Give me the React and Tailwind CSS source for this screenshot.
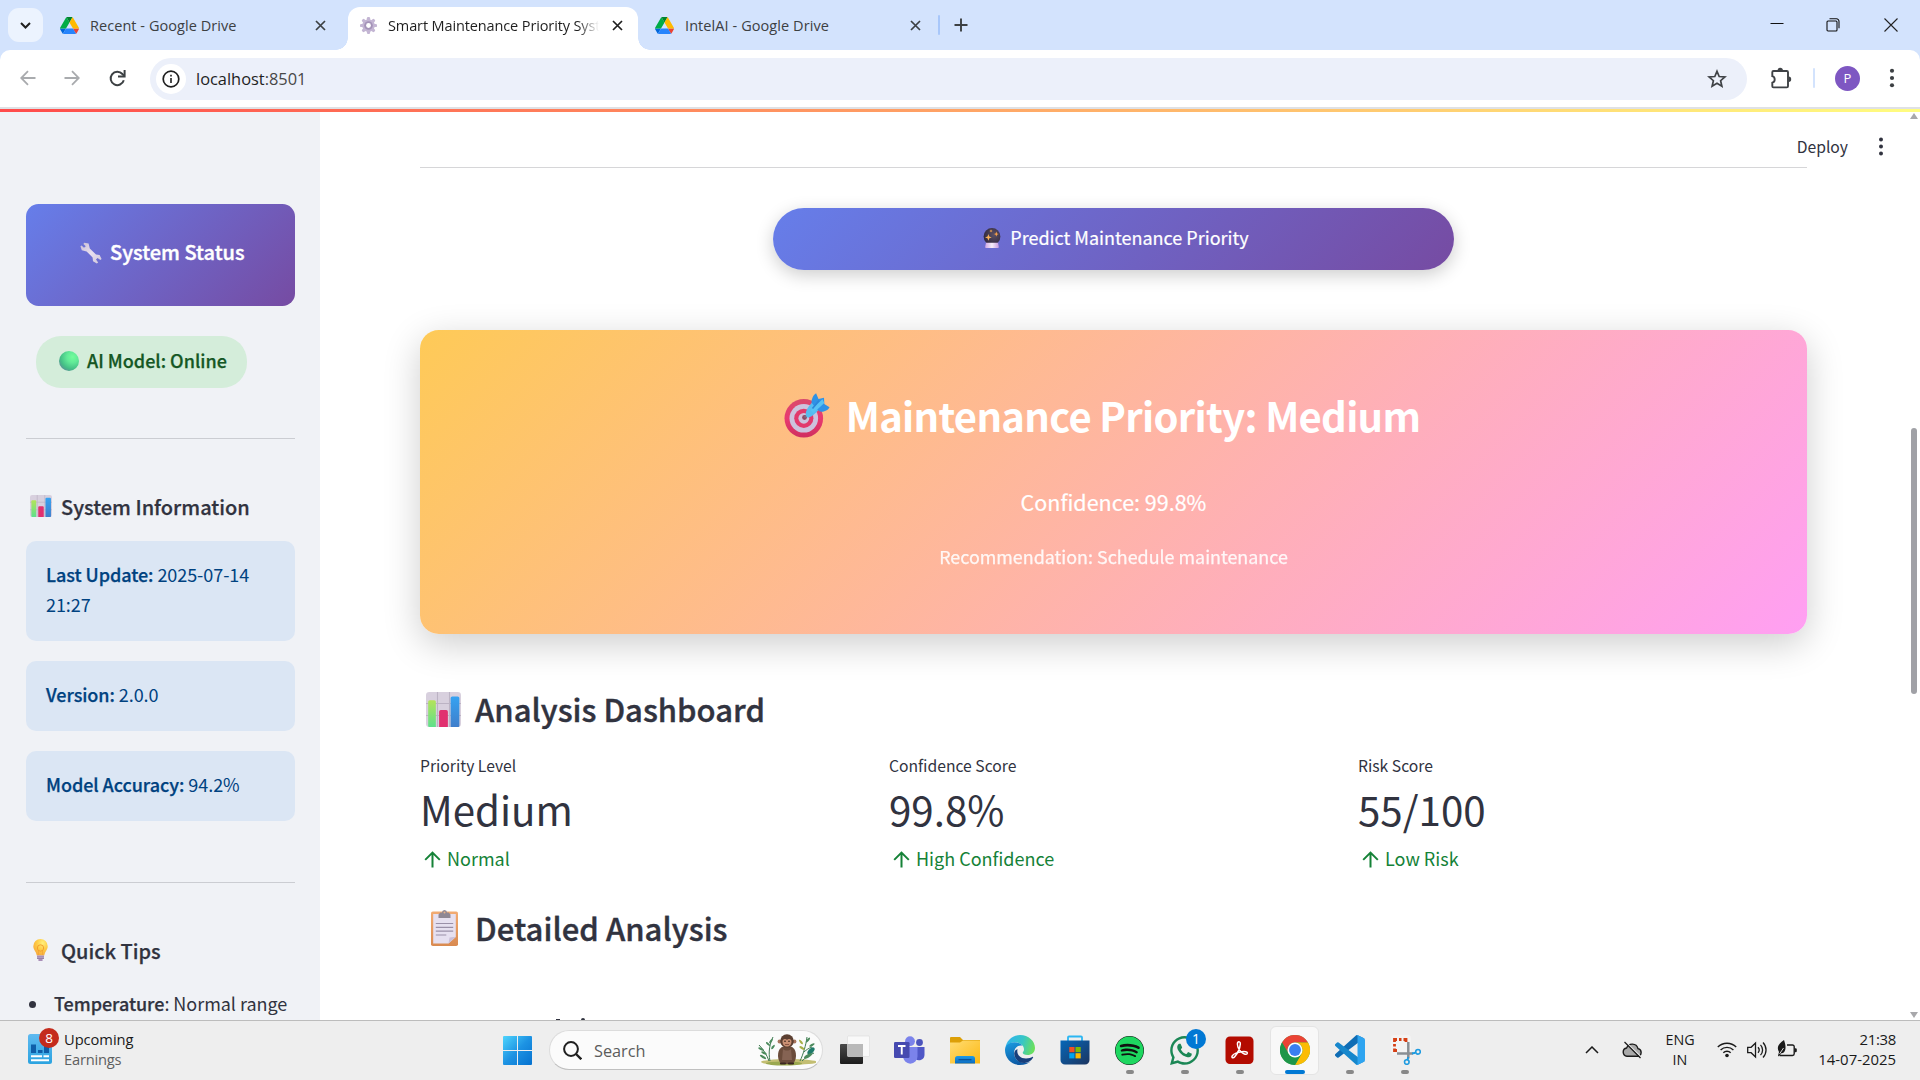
import React from "react";
import { FaSpotify, FaWhatsapp } from "react-icons/fa";

/* ---------- emoji ---------- */

const Wrench = () => (
  <svg className="h-[22px] w-[22px] shrink-0" viewBox="0 0 22 22">
    <defs>
      <linearGradient id="wr" x1="0" y1="0" x2="1" y2="1">
        <stop offset="0" stopColor="#c9bdd2" />
        <stop offset=".5" stopColor="#e8dff0" />
        <stop offset="1" stopColor="#cfc5d8" />
      </linearGradient>
    </defs>
    <path d="M4.2.8 8.6 1.6 9.8 6.6 16 12.6l3.6.4 2 4-1.2 1-2.8-2-1.6 1.6 2.2 2.8-1.4 1-3.8-2.2-.4-3.8-6-6L1.8 8.2.4 4.2l1.2-.8 2.4 2.4 1.8-1.6L3.4 2z" fill="url(#wr)" />
  </svg>
);

const GreenCircle = () => (
  <svg className="h-5 w-5 shrink-0" viewBox="0 0 20 20">
    <defs>
      <radialGradient id="gc" cx=".68" cy=".3" r=".8">
        <stop offset="0" stopColor="#72fd9b" />
        <stop offset=".35" stopColor="#62ea98" />
        <stop offset=".75" stopColor="#45bf86" />
        <stop offset="1" stopColor="#5a8f97" />
      </radialGradient>
    </defs>
    <circle cx="10" cy="10" r="10" fill="url(#gc)" />
  </svg>
);

const Chart = ({ className, id }) => (
  <svg className={className} viewBox="0 0 32 32">
    <defs>
      <linearGradient id={id + "g"} x1="0" y1="0" x2="0" y2="1">
        <stop offset="0" stopColor="#b4e35a" />
        <stop offset="1" stopColor="#5fe08c" />
      </linearGradient>
      <linearGradient id={id + "b"} x1="0" y1="0" x2="0" y2="1">
        <stop offset="0" stopColor="#36a3f2" />
        <stop offset="1" stopColor="#3f7ecb" />
      </linearGradient>
    </defs>
    <rect width="32" height="32" rx="3" fill="#d8d0de" />
    <path d="M10.5 0v32M21.5 0v32M0 10.5h32M0 21.5h32" stroke="#bcb3c4" strokeWidth="1" />
    <path d="M2 9a1.5 1.5 0 0 1 1.500-1.500h4A1.500 1.500 0 0 1 9 9v23H3a1 1 0 0 1-1-1z" fill={"url(#" + id + "g)"} />
    <path d="M12 18a1.500 1.500 0 0 1 1.500-1.500h5A1.500 1.500 0 0 1 20 18v14h-8z" fill="#e1306f" />
    <path d="M22.500 5.500A1.500 1.500 0 0 1 24 4h5a1.500 1.500 0 0 1 1.500 1.500V31a1 1 0 0 1-1 1h-7z" fill={"url(#" + id + "b)"} />
  </svg>
);

const Bulb = () => (
  <svg className="h-[22px] w-[15px] shrink-0" viewBox="0 0 15 22">
    <defs>
      <radialGradient id="bu" cx=".65" cy=".25" r=".8">
        <stop offset="0" stopColor="#fff07c" />
        <stop offset=".5" stopColor="#fecb45" />
        <stop offset="1" stopColor="#f6a83c" />
      </radialGradient>
    </defs>
    <path d="M7.500 0A7.200 7.200 0 0 1 14.700 7.200c0 3.300-2.500 4.700-3.500 9.300H3.800C2.800 11.900.3 10.500.3 7.200A7.200 7.200 0 0 1 7.500 0z" fill="url(#bu)" />
    <circle cx="7.500" cy="9" r="3.200" fill="none" stroke="#f09a2c" strokeWidth=".9" />
    <path d="M5.500 16v-4M9.500 16v-4" stroke="#f0a33a" strokeWidth=".8" />
    <rect x="4" y="16.500" width="7" height="1.700" fill="#a98fb8" />
    <rect x="4" y="18.400" width="7" height="1.500" fill="#8f769f" />
    <rect x="5.200" y="20" width="4.600" height="2" rx="1" fill="#a98fb8" />
  </svg>
);

const CrystalBall = () => (
  <svg className="h-5 w-[18px] shrink-0" viewBox="0 0 18 20">
    <defs>
      <radialGradient id="cb" cx=".6" cy=".4" r=".6">
        <stop offset="0" stopColor="#5b5166" />
        <stop offset="1" stopColor="#332a40" />
      </radialGradient>
      <linearGradient id="cs" x1="0" x2="1" y1="0" y2="0">
        <stop offset="0" stopColor="#cfa6e6" />
        <stop offset=".5" stopColor="#f6eef9" />
        <stop offset="1" stopColor="#c79be0" />
      </linearGradient>
    </defs>
    <circle cx="9" cy="8.500" r="8.400" fill="url(#cb)" />
    <path d="M3 14.800h12l.8 4a1 1 0 0 1-1 1.200H3.200a1 1 0 0 1-1-1.200z" fill="url(#cs)" />
    <path d="m5.400 6 .9 2.500 2.500.9-2.500.9-.9 2.500-.9-2.500-2.500-.9 2.500-.9z" fill="#f9b25b" />
    <path d="m13.300 3.600.7 1.800 1.700.7-1.700.7-.7 1.800-.7-1.800-1.700-.7 1.700-.7z" fill="#f9a24b" />
    <path d="m8 1.300.5 1.200 1.200.4-1.200.5L8 4.500l-.5-1.100-1.200-.5 1.200-.4z" fill="#f3a653" />
  </svg>
);

const Target = () => (
  <svg className="h-[46px] w-[46px] shrink-0" viewBox="0 0 46 46">
    <defs>
      <linearGradient id="tg" x1="0" y1="0" x2="0" y2="1">
        <stop offset="0" stopColor="#d94a6c" />
        <stop offset=".5" stopColor="#e93a70" />
        <stop offset="1" stopColor="#cf2f5f" />
      </linearGradient>
    </defs>
    <circle cx="19.800" cy="25.300" r="19.300" fill="url(#tg)" />
    <circle cx="19.800" cy="25.300" r="14.300" fill="#cdc3dd" />
    <circle cx="19.800" cy="25.300" r="9.600" fill="#e23a6c" />
    <circle cx="19.800" cy="25.300" r="5.400" fill="#cdc3dd" />
    <circle cx="20.500" cy="24.500" r="2.400" fill="#8f4a63" />
    <path d="M20.500 24.500 31 14" stroke="#7b6a86" strokeWidth="1.800" />
    <path d="M22 19c.8-3.500 4-7.500 7-10.500L36 15c-2.500 3.500-7 8-11 9.600-2.600.6-3.700-2.600-3-5.600z" fill="#55bdf0" />
    <path d="M27.500 9.500c0-3.500 2-8 4.600-9.300L34.500 6l5.500-1.200.3 6.200 5.200 3.200c-1.500 3.200-6 5-9.700 4.400L32 15.500z" fill="#2f92e6" />
    <path d="M26.500 17.500 38.500 6.300l1.800 3.700L29.500 20z" fill="#58c3f3" />
    <path d="m28.500 15.500 6.500-8" stroke="#2c86d8" strokeWidth="1.600" />
  </svg>
);

const Clipboard = () => (
  <svg className="h-9 w-[27px] shrink-0" viewBox="0 0 27 36">
    <defs>
      <linearGradient id="cl" x1="0" y1="0" x2="0" y2="1">
        <stop offset="0" stopColor="#f2ab72" />
        <stop offset="1" stopColor="#d98a50" />
      </linearGradient>
    </defs>
    <rect y="1.500" width="27" height="34.500" rx="1.800" fill="url(#cl)" />
    <path d="M2.200 4h22.600v23L17.500 33.500H2.200z" fill="#e6e0f0" />
    <path d="m17.500 33.500 1-6 6.300-.8z" fill="#cabfd8" />
    <path d="M13.500 0a2.600 2.600 0 0 1 2.500 2.500h1.600L19.500 4.500V8H7.500V4.500L9.400 2.500H11A2.600 2.600 0 0 1 13.500 0z" fill="#8f8794" />
    <circle cx="13.500" cy="2.500" r="1" fill="#e8b48a" />
    <path d="M4.800 13.500h17.400M4.800 17.300h17.400M4.800 21.200h17.400M4.800 25h10.500" stroke="#9a90a8" strokeWidth="1.200" />
  </svg>
);

/* ---------- browser ---------- */

const Drive = () => (
  <svg className="h-[17px] w-[19px] shrink-0" viewBox="0 0 87.300 78">
    <path d="m6.600 66.850 3.850 6.650c.8 1.400 1.950 2.500 3.300 3.300l13.750-23.800h-27.500c0 1.550.4 3.100 1.200 4.500z" fill="#0066da" />
    <path d="m43.650 25-13.750-23.800c-1.350.8-2.500 1.900-3.300 3.300l-25.400 44a9.060 9.060 0 0 0-1.200 4.500h27.500z" fill="#00ac47" />
    <path d="m73.550 76.800c1.350-.8 2.500-1.900 3.300-3.300l1.600-2.750 7.650-13.250c.8-1.400 1.200-2.950 1.200-4.500h-27.502l5.852 11.500z" fill="#ea4335" />
    <path d="m43.650 25 13.750-23.800c-1.350-.8-2.900-1.200-4.500-1.200h-18.500c-1.600 0-3.150.45-4.500 1.200z" fill="#00832d" />
    <path d="m59.800 53h-32.300l-13.750 23.800c1.350.8 2.900 1.200 4.500 1.200h50.800c1.600 0 3.150-.45 4.500-1.200z" fill="#2684fc" />
    <path d="m73.400 26.500-12.700-22c-.8-1.400-1.950-2.500-3.300-3.300l-13.750 23.800 16.150 28h27.450c0-1.550-.4-3.100-1.200-4.500z" fill="#ffba00" />
  </svg>
);

const Gear = () => (
  <svg className="h-[17px] w-[17px] shrink-0" viewBox="0 0 17 17">
    <g fill="#c3b5d3">
      <circle cx="8.500" cy="8.500" r="6.300" />
      {[0, 45, 90, 135, 180, 225, 270, 315].map((a) => (
        <rect key={a} x="6.900" y="0" width="3.200" height="5" rx="1.200" transform={`rotate(${a} 8.500 8.500)`} />
      ))}
    </g>
    <circle cx="8.500" cy="8.500" r="4.300" fill="#a493b8" />
    <circle cx="8.500" cy="8.500" r="2.400" fill="#fff" />
  </svg>
);

const CloseX = ({ className }) => (
  <svg className={"h-[11px] w-[11px] shrink-0 " + className} viewBox="0 0 11 11">
    <path d="m1 1 9 9M10 1l-9 9" stroke="currentColor" strokeWidth="1.700" />
  </svg>
);

const Dots = ({ className }) => (
  <svg className={"w-[6px] shrink-0 " + className} viewBox="0 0 6 22">
    <circle cx="3" cy="3" r="2.300" fill="currentColor" />
    <circle cx="3" cy="11" r="2.300" fill="currentColor" />
    <circle cx="3" cy="19" r="2.300" fill="currentColor" />
  </svg>
);

const TabStrip = () => (
  <div className="flex h-[50px] items-center text-[14.500px] text-[#3c4043]">
    <div className="ml-2 flex h-[34px] w-[35px] items-center justify-center rounded-[11px] bg-[#ecf3fe]">
      <svg className="h-[7px] w-[11px]" viewBox="0 0 11 7">
        <path d="m1 1 4.500 4.500L10 1" fill="none" stroke="#1f1f1f" strokeWidth="2" />
      </svg>
    </div>
    <div className="flex w-[305px] items-center pl-[17px]">
      <Drive />
      <span className="mt-px ml-[11px] w-[225px] tracking-[0.050px] whitespace-nowrap">Recent - Google Drive</span>
      <CloseX className="text-[#3c4043]" />
    </div>
    <div className="relative mt-[7px] flex h-[43px] w-[290px] items-center rounded-t-[12px] bg-white pb-[7px] pl-3">
      <span className="absolute bottom-0 -left-3 h-3 w-3 bg-[radial-gradient(circle_at_0_0,#d3e3fd_11.500px,#ffffff_12px)]" />
      <span className="absolute -right-3 bottom-0 h-3 w-3 bg-[radial-gradient(circle_at_100%_0,#d3e3fd_11.500px,#ffffff_12px)]" />
      <Gear />
      <span className="mt-px ml-[11px] w-[211px] overflow-hidden [mask-image:linear-gradient(to_right,black_90%,transparent)] tracking-[-0.120px] whitespace-nowrap text-[#1f1f1f]">
        Smart Maintenance Priority System
      </span>
      <CloseX className="ml-[13px] text-[#1f1f1f]" />
    </div>
    <div className="flex w-[300px] items-center pl-[17px]">
      <Drive />
      <span className="mt-px ml-[11px] w-[225px] tracking-[0.080px] whitespace-nowrap">IntelAI - Google Drive</span>
      <CloseX className="text-[#3c4043]" />
    </div>
    <span className="h-5 w-[2px] rounded bg-[#a8c7fa]" />
    <svg className="ml-[14px] h-[14px] w-[14px]" viewBox="0 0 14 14">
      <path d="M7 .5v13M.5 7h13" stroke="#3c4043" strokeWidth="1.900" />
    </svg>
    <div className="ml-auto flex items-center pr-[22px]">
      <svg className="h-[14px] w-[14px]" viewBox="0 0 14 14">
        <path d="M.5 5.500h13" stroke="#111" strokeWidth="1" />
      </svg>
      <svg className="ml-[42px] h-[14px] w-[14px]" viewBox="0 0 14 14" fill="none" stroke="#111" strokeWidth="1.100">
        <rect x="1" y="3" width="10" height="10" rx="1" />
        <path d="M3.500.8h7a2.500 2.500 0 0 1 2.500 2.500v7" />
      </svg>
      <svg className="ml-11 h-[14px] w-[14px]" viewBox="0 0 14 14">
        <path d="m.5.5 13 13M13.500.5l-13 13" stroke="#222" strokeWidth="1.100" />
      </svg>
    </div>
  </div>
);

const Toolbar = () => (
  <div className="flex h-[59px] items-start rounded-t-[10px] border-b-2 border-[#dfe1e5] bg-white pt-2">
    <div className="flex h-[42px] w-[150px] items-center pb-[2px] pl-5">
      <svg className="h-4 w-4" viewBox="0 0 16 16" fill="none" stroke="#a9abae" strokeWidth="1.800">
        <path d="M15.500 8H1.500M8 1.200 1.200 8 8 14.800" />
      </svg>
      <svg className="ml-7 h-4 w-4" viewBox="0 0 16 16" fill="none" stroke="#a9abae" strokeWidth="1.800">
        <path d="M.5 8h14M8 1.200 14.800 8 8 14.800" />
      </svg>
      <svg className="ml-[29px] h-[17px] w-[17px]" viewBox="0 0 17 17" fill="none" stroke="#3c4043" strokeWidth="2">
        <path d="M14.800 10.200A6.700 6.700 0 1 1 13.400 4L15 5.600" />
        <path d="M15.600 0v6.600H9" />
      </svg>
    </div>
    <div className="flex h-[42px] w-[1597px] items-center rounded-full bg-[#ecf0fa] pl-[6px]">
      <div className="flex h-[30px] w-[30px] items-center justify-center rounded-full bg-white">
        <svg className="h-[18px] w-[18px]" viewBox="0 0 18 18" fill="none" stroke="#1f1f1f">
          <circle cx="9" cy="9" r="7.800" strokeWidth="1.700" />
          <path d="M9 8v5M9 4.700v1.700" strokeWidth="1.600" />
        </svg>
      </div>
      <span className="mt-px ml-[10px] text-[16.400px] text-[#1f1f1f]">
        localhost<span className="text-[#474747]">:8501</span>
      </span>
      <svg className="mr-5 ml-auto h-5 w-5" viewBox="0 0 20 20">
        <path d="m10 2.300 2.200 5.200 5.700.5-4.300 3.700 1.300 5.500-4.900-2.900-4.900 2.900 1.300-5.500L2.100 8l5.700-.5z" fill="none" stroke="#3f4246" strokeWidth="1.700" />
      </svg>
    </div>
    <div className="flex h-[42px] items-center pb-[2px] pl-[23px]">
      <svg className="h-[22px] w-[23px]" viewBox="0 0 23 22">
        <path d="M3.500 4h13.300c.7 0 1.200.5 1.200 1.200v14c0 .7-.5 1.200-1.200 1.200H3.500c-.7 0-1.200-.5-1.200-1.200v-3.500a3.400 3.400 0 0 0 0-6.500v-4c0-.7.500-1.200 1.200-1.200z" fill="none" stroke="#3f4246" strokeWidth="1.900" />
        <path d="M7.500 3.200a2.700 2.500 0 0 1 5.400 0zM18.700 9.500a2.500 2.700 0 0 1 0 5.400z" fill="#3f4246" />
      </svg>
      <span className="ml-5 h-5 w-[2px] rounded bg-[#d3e3fd]" />
      <span className="ml-5 flex h-[25px] w-[25px] items-center justify-center rounded-full bg-[#7e57c2] text-[13px] leading-none text-white">P</span>
      <Dots className="ml-[29px] h-5 text-[#3c4043]" />
    </div>
  </div>
);

/* ---------- sidebar ---------- */

const InfoBox = ({ label, value }) => (
  <div className="rounded-[10px] bg-[#dbe6f4] px-5 pt-[18px] pb-[22px] text-[18px] leading-[30px] tracking-[-0.060px] text-[#004280]">
    <span className="font-medium [-webkit-text-stroke:0.250px_#004280]">{label}</span> {value}
  </div>
);

const Sidebar = () => (
  <div className="h-full w-80 shrink-0 overflow-hidden bg-[#f0f2f6] px-[26px] pt-[92px] pr-[25px]">
    <div className="flex h-[102px] items-start rounded-[12.500px] bg-[linear-gradient(135deg,#667eea_0%,#764ba2_100%)] pt-[33px] pl-[54px] text-[20px] leading-[30px] font-medium text-white">
      <div className="mt-[5px]"><Wrench /></div>
      <span className="ml-2 [-webkit-text-stroke:0.400px_#ffffff]">System Status</span>
    </div>
    <div className="mt-[30px] ml-[10px] flex h-[52px] w-[211px] items-center rounded-[25px] bg-[#d4edda] pb-1 pl-[23px] text-[18px] font-medium text-[#155724]">
      <div className="mt-[2px]"><GreenCircle /></div>
      <span className="ml-2 whitespace-nowrap [-webkit-text-stroke:0.250px_#155724]">AI Model: Online</span>
    </div>
    <div className="mt-[50px] h-px bg-[#cbcdd2]" />
    <div className="mt-[53px] flex items-center pl-1 text-[20px] leading-7 font-medium text-[#31333f]">
      <Chart id="sc" className="h-[22px] w-[22px]" />
      <span className="relative top-px ml-[9px] [-webkit-text-stroke:0.250px_#31333f]">System Information</span>
    </div>
    <div className="mt-[21px] flex flex-col gap-5">
      <InfoBox label="Last Update:" value="2025-07-14 21:27" />
      <InfoBox label="Version:" value="2.0.0" />
      <InfoBox label="Model Accuracy:" value="94.2%" />
    </div>
    <div className="mt-[61px] h-px bg-[#cbcdd2]" />
    <div className="mt-[53px] flex items-center pl-[7px] text-[20px] leading-7 font-medium text-[#31333f]">
      <Bulb />
      <span className="relative top-px ml-[13px] [-webkit-text-stroke:0.250px_#31333f]">Quick Tips</span>
    </div>
    <div className="mt-6 flex items-center pl-[3px] text-[18px] leading-[30px] whitespace-nowrap text-[#31333f]">
      <span className="mt-[3px] h-[7px] w-[7px] rounded-full bg-[#31333f]" />
      <span className="ml-[18px] tracking-[-0.040px]"><span className="font-medium [-webkit-text-stroke:0.250px_#31333f]">Temperature</span>: Normal range</span>
    </div>
  </div>
);

/* ---------- main ---------- */

const METRICS = [
  ["Priority Level", "Medium", "Normal"],
  ["Confidence Score", "99.8%", "High Confidence"],
  ["Risk Score", "55/100", "Low Risk"],
];

const Metric = ({ label, value, delta }) => (
  <div className="text-[#31333f]">
    <div className="text-[15.700px] leading-6">{label}</div>
    <div className="mt-1 text-[40.300px] leading-[54px]">{value}</div>
    <div className="mt-[7px] flex items-center pl-1 text-[18px] leading-[30px] text-[#158237]">
      <svg className="mt-[2px] h-[17px] w-[17px]" viewBox="0 0 17 17" fill="none" stroke="currentColor" strokeWidth="2">
        <path d="M8.500 16.500V1.800M1.200 8.900l7.300-7.300 7.300 7.300" />
      </svg>
      <span className="ml-[6px]">{delta}</span>
    </div>
  </div>
);

const Main = () => (
  <div className="relative h-full flex-1 overflow-hidden bg-white pr-[113px] pl-[100px]">
    <div className="absolute top-5 right-[36px] flex items-center text-[15.700px] leading-[30px] text-[#31333f]">
      <span>Deploy</span>
      <Dots className="mb-[2px] ml-[30px] h-[19px]" />
    </div>
    <div className="mt-[55px] h-px bg-[#d6d6d8]" />
    <div className="mt-10 ml-[353px] flex h-[62px] w-[681px] items-center justify-center rounded-[31px] bg-[linear-gradient(135deg,#667eea_0%,#764ba2_100%)] pb-[3px] pl-[5px] text-[18px] text-white shadow-[0_5px_18px_rgba(0,0,0,0.2)]">
      <CrystalBall />
      <span className="ml-[9px] [-webkit-text-stroke:0.200px_#ffffff]">Predict Maintenance Priority</span>
    </div>
    <div className="mt-[60px] flex h-[304px] flex-col items-center rounded-[18.750px] bg-[linear-gradient(135deg,#feca57_0%,#ff9ff3_100%)] pt-[58px] text-white shadow-[0_10px_37px_rgba(0,0,0,0.2)]">
      <div className="flex items-center pr-[23px] text-[40px] leading-[54px] font-bold">
        <div className="mt-[2px]"><Target /></div>
        <span className="ml-4 tracking-[-0.700px]">Maintenance Priority: Medium</span>
      </div>
      <div className="mt-[41px] text-[21.500px] leading-[38px] [-webkit-text-stroke:0.200px_#ffffff]">Confidence: 99.8%</div>
      <div className="mt-5 text-[17.900px] leading-[30px] opacity-90 [-webkit-text-stroke:0.250px_#ffffff]">Recommendation: Schedule maintenance</div>
    </div>
    <div className="mt-[54px] flex items-center pl-[6px] text-[31px] leading-[42px] font-medium text-[#31333f]">
      <Chart id="mc" className="h-[35px] w-[35px]" />
      <span className="ml-[14px] tracking-[0.020px] [-webkit-text-stroke:0.400px_#31333f]">Analysis Dashboard</span>
    </div>
    <div className="mt-6 grid grid-cols-3 gap-5">
      {METRICS.map(([l, v, d]) => (
        <Metric key={l} label={l} value={v} delta={d} />
      ))}
    </div>
    <div className="mt-[34px] flex items-center pl-[11px] text-[31px] leading-[42px] font-medium text-[#31333f]">
      <Clipboard />
      <span className="ml-[17px] tracking-[0.050px] [-webkit-text-stroke:0.400px_#31333f]">Detailed Analysis</span>
    </div>
    <div className="mt-[69px] flex gap-[21px] pl-[136px]">
      <span className="mt-px h-2 w-1 bg-[#31333f]" />
      <span className="h-2 w-1 rounded-t-full bg-[#31333f]" />
    </div>
    <div className="absolute top-0 right-[2px] flex h-full w-[9px] flex-col items-center">
      <span className="mt-[1px] h-0 w-0 border-x-[4px] border-b-[6px] border-x-transparent border-b-[#a8a8ab]" />
      <span className="mt-[309px] h-[266px] w-[6px] rounded-full bg-[#a0a1a6]" />
      <span className="mt-[318px] h-0 w-0 border-x-[4px] border-t-[6px] border-x-transparent border-t-[#a8a8ab]" />
    </div>
  </div>
);

/* ---------- taskbar ---------- */

const WidgetIcon = () => (
  <svg className="h-[30px] w-6" viewBox="0 0 24 30">
    <defs>
      <linearGradient id="wi" x1="0" y1="0" x2="0" y2="1">
        <stop offset="0" stopColor="#5fbaf0" />
        <stop offset="1" stopColor="#2ba3e0" />
      </linearGradient>
    </defs>
    <rect width="24" height="30" rx="2.500" fill="url(#wi)" />
    <path d="M3 10.500h5V19H3zM10 16h4.500v3H10zM16 12h5v7h-5z" fill="#0f5ea8" />
    <path d="M3 22.300h11M15.500 22.300H21M3 26.300h18" stroke="#fff" strokeWidth="1.900" />
  </svg>
);

const WinLogo = () => (
  <svg className="h-[29px] w-[29px]" viewBox="0 0 29 29">
    <defs>
      <linearGradient id="wl" gradientUnits="userSpaceOnUse" x1="0" y1="0" x2="29" y2="29">
        <stop offset="0" stopColor="#4fd5fd" />
        <stop offset=".5" stopColor="#1d93e3" />
        <stop offset="1" stopColor="#0571cf" />
      </linearGradient>
    </defs>
    <path d="M1 0h13v14H0V1a1 1 0 0 1 1-1zM15 0h13a1 1 0 0 1 1 1v13H15zM0 15h14v14H1a1 1 0 0 1-1-1zM15 15h14v13a1 1 0 0 1-1 1H15z" fill="url(#wl)" />
  </svg>
);

const Monkey = () => (
  <svg className="h-8 w-[58px]" viewBox="0 0 58 32">
    <ellipse cx="31" cy="28" rx="28" ry="3" fill="#c3be72" />
    <ellipse cx="26" cy="29.500" rx="18" ry="2" fill="#9aa84f" />
    <g stroke="#3f7a52" strokeWidth="1" fill="none">
      <path d="M11 27C9 21 5 15 1 11M12 27C10 18 12 9 15 3M42 27c3-6 6-16 7-24M44 27c3-3 7-6 12-8M46 18c2-2 5-4 8-5" />
    </g>
    <g fill="#4b8a5c">
      <ellipse cx="3" cy="15" rx="3" ry="1.100" transform="rotate(25 3 15)" />
      <ellipse cx="6" cy="19" rx="3" ry="1.100" transform="rotate(25 6 19)" />
      <ellipse cx="5" cy="23" rx="3.500" ry="1.200" transform="rotate(30 5 23)" />
      <ellipse cx="13" cy="7" rx="2.600" ry="1" transform="rotate(-50 13 7)" />
      <ellipse cx="10" cy="10" rx="2.600" ry="1" transform="rotate(40 10 10)" />
      <ellipse cx="15" cy="13" rx="2.600" ry="1" transform="rotate(-50 15 13)" />
      <ellipse cx="53" cy="17" rx="4.500" ry="2.300" transform="rotate(-45 53 17)" fill="#1f7a6a" />
      <ellipse cx="50" cy="22" rx="4.500" ry="1.600" transform="rotate(-30 50 22)" />
      <ellipse cx="44" cy="14" rx="3" ry="1.200" transform="rotate(30 44 14)" fill="#a8b04a" />
      <ellipse cx="43" cy="8" rx="2.800" ry="1.100" transform="rotate(50 43 8)" fill="#a8b04a" />
      <ellipse cx="50" cy="6" rx="3" ry="1.100" transform="rotate(-50 50 6)" />
      <ellipse cx="54" cy="11" rx="3" ry="1.100" transform="rotate(-30 54 11)" />
    </g>
    <path d="M20 22c0-7 3-10 9-10s9 3 9 10c0 4-2 7-4 8H24c-2-1-4-4-4-8z" fill="#6b4c3b" />
    <path d="M25 15c2 2 6 2 8 0l1 11h-10z" fill="#856353" />
    <circle cx="21.500" cy="7.500" r="1.900" fill="#a8755d" />
    <circle cx="36.500" cy="7.500" r="1.900" fill="#a8755d" />
    <circle cx="29" cy="7" r="6.800" fill="#5c4032" />
    <path d="M24.500 7a2.500 2.300 0 0 1 4.500-1 2.500 2.300 0 0 1 4.500 1c0 4-2 5.500-4.500 5.500S24.500 11 24.500 7z" fill="#c98f72" />
    <circle cx="27" cy="7.200" r=".8" fill="#2a1a14" />
    <circle cx="31" cy="7.200" r=".8" fill="#2a1a14" />
    <path d="M27 10.500h4" stroke="#7a4638" strokeWidth=".8" />
    <path d="M23 29.500h4M31 29.500h4" stroke="#3a2820" strokeWidth="2.200" strokeLinecap="round" />
  </svg>
);

const TaskView = () => (
  <svg className="h-[30px] w-[30px]" viewBox="0 0 30 30">
    <defs>
      <linearGradient id="tv" x1="0" y1="0" x2="0" y2="1">
        <stop offset="0" stopColor="#4a4a4a" />
        <stop offset="1" stopColor="#1c1c1c" />
      </linearGradient>
    </defs>
    <rect x="0" y="9" width="23" height="20" rx="1" fill="url(#tv)" />
    <rect x="7.500" y="1" width="22" height="20.500" rx="1" fill="#fafafa" fillOpacity=".9" stroke="#dadada" strokeWidth=".6" />
    <rect x="7.500" y="9" width="15.500" height="12.500" fill="#b9b9b9" />
  </svg>
);

const Teams = () => (
  <svg className="h-[28px] w-[31px]" viewBox="0 0 31 28">
    <circle cx="25.500" cy="6.500" r="3.400" fill="#4b53bc" />
    <path d="M20 11h10.500v8a5.500 5.500 0 0 1-9 4z" fill="#4f57c6" />
    <circle cx="16" cy="5.200" r="4.900" fill="#7b83eb" />
    <path d="M9 11h14.500v9.500a7.200 7.200 0 0 1-14.400 0z" fill="#7b83eb" />
    <rect x="0" y="6" width="15.500" height="16" rx="1.300" fill="#4549b0" />
    <path d="M4 10h7.500M7.750 10v8.500" stroke="#fff" strokeWidth="1.900" />
  </svg>
);

const Explorer = () => (
  <svg className="h-[27px] w-[30px]" viewBox="0 0 30 27">
    <defs>
      <linearGradient id="fe" x1="0" y1="0" x2="1" y2="1">
        <stop offset="0" stopColor="#ffdc73" />
        <stop offset="1" stopColor="#fdb913" />
      </linearGradient>
      <linearGradient id="fb" x1="0" y1="0" x2="0" y2="1">
        <stop offset="0" stopColor="#1f9be6" />
        <stop offset="1" stopColor="#0a6ac0" />
      </linearGradient>
    </defs>
    <path d="M1 0h9l3 3h17v6H0V1a1 1 0 0 1 1-1z" fill="#dc9f07" />
    <path d="M0 5.500h10L13 3.500h17V26.500H0z" fill="url(#fe)" />
    <path d="M5 21.500a2.500 2.500 0 0 1 2.500-2.500h15a2.500 2.500 0 0 1 2.500 2.500v5H5z" fill="url(#fb)" />
    <path d="M8.500 22.700h13" stroke="#0b4f94" strokeWidth="1.200" />
  </svg>
);

const Edge = () => (
  <svg className="h-[30px] w-[30px]" viewBox="0 0 30 30">
    <defs>
      <linearGradient id="e1" x1="0" y1=".3" x2="1" y2=".5">
        <stop offset="0" stopColor="#2fb3ee" />
        <stop offset=".55" stopColor="#36c5c8" />
        <stop offset="1" stopColor="#6be05a" />
      </linearGradient>
      <linearGradient id="e2" x1="0" y1="0" x2=".4" y2="1">
        <stop offset="0" stopColor="#1b9de2" />
        <stop offset="1" stopColor="#0c59a4" />
      </linearGradient>
    </defs>
    <path d="M.4 13.500C1 6 7 0 15 0c8.500 0 15 6 15 13 0 4.600-3.500 7-7.500 7-3.200 0-4.800-1-4.800-2.200 0-.8 1.300-1.400 1.300-3.600 0-3.400-4-7-9.500-7C5.500 7.200 2 10 .4 13.500z" fill="url(#e1)" />
    <path d="M0 15C0 10.500 4 7.200 9.500 7.200c3.500 0 6.500 1.500 8 3.600-4-1.300-8.500 2-8.500 7 0 6 5 10 10.500 10 3 0 5-.7 6.500-1.600C23.500 28.600 19.500 30 15 30 6.500 30 0 23.300 0 15z" fill="url(#e2)" />
    <path d="M12.600 14.300c-1.400 4.200 2 9.200 8.400 9.200 3 0 5-.8 6.200-1.500.8-.4 1.200.2.800.8-2 3.400-5 5-8.500 5.200C12 28.200 8 21 9.500 17c.7-1.700 1.800-2.400 3.100-2.700z" fill="#173f7c" />
  </svg>
);

const Store = () => (
  <svg className="h-[30px] w-[30px]" viewBox="0 0 30 30">
    <defs>
      <linearGradient id="st" x1="0" y1="0" x2="1" y2="1">
        <stop offset="0" stopColor="#0667b8" />
        <stop offset="1" stopColor="#1c3560" />
      </linearGradient>
    </defs>
    <path d="M8 7V2.500a1 1 0 0 1 1-1h12a1 1 0 0 1 1 1V7" fill="none" stroke="#2bb6f2" strokeWidth="1.800" />
    <path d="M.5 5.500h29V25a4.500 4.500 0 0 1-4.500 4.500H5A4.500 4.500 0 0 1 .5 25z" fill="url(#st)" />
    <rect x="9.300" y="12" width="5.200" height="5.200" fill="#f25022" />
    <rect x="15.500" y="12" width="5.200" height="5.200" fill="#7fba00" />
    <rect x="9.300" y="18.200" width="5.200" height="5.200" fill="#00a4ef" />
    <rect x="15.500" y="18.200" width="5.200" height="5.200" fill="#ffb900" />
  </svg>
);

const Acrobat = () => (
  <svg className="h-[29px] w-[29px]" viewBox="0 0 29 29">
    <rect x=".5" y=".5" width="28" height="27.500" rx="4.500" fill="#b30b00" />
    <path d="M12.600 6.600c1-1.600 2.900-.9 2.700 1.300-.3 3.700-2.900 9.700-5.600 12.900-1.400 1.600-3.300 1-2.600-.7 1-2.300 6.900-4.600 11.600-4.700 3.100 0 4.200 1.300 3.400 2.400-1 1.200-4.300 0-6.400-2.200-2.300-2.400-4-6.800-3.100-9z" fill="none" stroke="#fff" strokeWidth="1.500" />
  </svg>
);

const Chrome = () => (
  <svg className="h-[30px] w-[30px]" viewBox="0 0 48 48">
    <circle cx="24" cy="24" r="24" fill="#34a853" />
    <path d="M3.200 12A24 24 0 0 1 44.800 12H24a12 12 0 0 0-10.400 18z" fill="#ea4335" />
    <path d="M44.800 12A24 24 0 0 1 24 48l10.400-18A12 12 0 0 0 24 12z" fill="#fbbc04" />
    <path d="M3.200 12A24 24 0 0 0 24 48l10.400-18A12 12 0 0 1 13.600 30z" fill="#1e9648" />
    <circle cx="24" cy="24" r="12" fill="#fff" />
    <circle cx="24" cy="24" r="9.500" fill="#3a7ff0" />
  </svg>
);

const VSCode = () => (
  <svg className="h-[30px] w-[30px]" viewBox="0 0 100 100">
    <path d="M96.500 10.800 75.900.9a6.200 6.200 0 0 0-7.100 1.200L1.300 63.600a4.200 4.200 0 0 0 0 6.100l5.500 5a4.200 4.200 0 0 0 5.300.3L93.400 13.400c2.700-2.100 6.600-.1 6.600 3.300v-.2a6.200 6.200 0 0 0-3.500-5.700z" fill="#0f6db5" />
    <path d="m96.500 89.200-20.600 9.900a6.200 6.200 0 0 1-7.100-1.200L1.300 36.400a4.200 4.200 0 0 1 0-6.100l5.500-5a4.200 4.200 0 0 1 5.300-.3l81.300 61.600c2.700 2.100 6.600.1 6.600-3.300v.2a6.200 6.200 0 0 1-3.500 5.700z" fill="#1787cc" />
    <path d="M75.900 99.100a6.200 6.200 0 0 1-7.100-1.200c2.300 2.300 6.200.7 6.200-2.600V4.700c0-3.300-3.900-4.900-6.200-2.600a6.200 6.200 0 0 1 7.100-1.200l20.600 9.900A6.200 6.200 0 0 1 100 16.400v67.200a6.200 6.200 0 0 1-3.500 5.600z" fill="#2ea4f0" />
  </svg>
);

const Snip = () => (
  <svg className="ml-[3px] h-[30px] w-[30px]" viewBox="0 0 30 30" fill="none">
    <rect x="0" y="0" width="20" height="20" rx="3" fill="#f3f3f3" />
    <path d="M6 15.500H3.500V13.500M3.500 11.500v-2.500M3.500 7V4.500H6M8 4.500h2.500M12.500 4.500H15V7" stroke="#d63f14" strokeWidth="2.800" />
    <path d="M17.300 7V23.500M6 18.500h16" stroke="#8a8f94" strokeWidth="2.500" />
    <circle cx="27" cy="16.800" r="2.300" stroke="#1e9be0" strokeWidth="1.600" />
    <circle cx="15.800" cy="27" r="2.300" stroke="#1e9be0" strokeWidth="1.600" />
    <path d="m21 18.500 3.500-.8M17.300 22l-.8 2.800" stroke="#1e9be0" strokeWidth="1.900" />
  </svg>
);

const AppCell = ({ children, running }) => (
  <div className="flex h-full w-[55px] flex-col items-center pt-[14px]">
    <div className="flex h-[30px] items-center">{children}</div>
    {running && <span className="mt-[5px] h-1 w-2 rounded-full bg-[#888]" />}
  </div>
);

const Taskbar = () => (
  <div className="flex h-[60px] border-t border-[#bcbcbc] bg-[#eeeeee] text-[14.700px] leading-5 text-[#1a1a1a]">
    <div className="flex w-[503px] pl-7">
      <div className="relative h-[30px] pt-[13px]">
        <WidgetIcon />
        <span className="absolute top-[7px] left-[11px] flex h-5 w-5 items-center justify-center rounded-full bg-[#c42b1c] text-[13.500px] text-white">8</span>
      </div>
      <div className="ml-3 pt-[8px]">
        <div className="tracking-[-0.050px]">Upcoming</div>
        <div className="tracking-[-0.200px] text-[#5f5f5f]">Earnings</div>
      </div>
    </div>
    <div className="pt-[15px]"><WinLogo /></div>
    <div className="mt-[9px] ml-[17px] flex h-10 w-[274px] items-center rounded-full border border-[#dcdcdc] border-b-[#c0c0c0] bg-[#fbfbfb] pr-[6px] pl-[13px]">
      <svg className="h-[19px] w-[19px]" viewBox="0 0 19 19" fill="none" stroke="#1f1f1f" strokeWidth="2">
        <circle cx="8" cy="8" r="6.900" />
        <path d="m13 13 5.300 5.300" strokeWidth="2.400" />
      </svg>
      <span className="mt-px ml-[12px] text-[16.300px] text-[#5c5c5c]">Search</span>
      <div className="ml-auto"><Monkey /></div>
    </div>
    <div className="ml-[4px] flex">
      <AppCell><TaskView /></AppCell>
      <AppCell><Teams /></AppCell>
      <AppCell><Explorer /></AppCell>
      <AppCell><Edge /></AppCell>
      <AppCell><Store /></AppCell>
      <AppCell running><span className="rounded-full bg-[#111]"><FaSpotify className="h-[29px] w-[29px] text-[#1ed760]" /></span></AppCell>
      <AppCell running>
        <span className="relative">
          <FaWhatsapp className="h-[33px] w-[33px] text-[#1b8755]" />
          <span className="absolute -top-[5px] -right-[5px] flex h-5 w-5 items-center justify-center rounded-full bg-[#0078d4] text-[14px] text-white">1</span>
        </span>
      </AppCell>
      <AppCell running><Acrobat /></AppCell>
      <div className="mx-[3px] mt-[5px] flex h-[49px] w-[49px] flex-col items-center rounded-md border border-[#e4e4e4] bg-[#f8f8f8] pt-2">
        <Chrome />
        <span className="mt-[5px] h-1 w-5 rounded-full bg-[#0078d4]" />
      </div>
      <AppCell running><VSCode /></AppCell>
      <AppCell running><Snip /></AppCell>
    </div>
    <div className="ml-auto flex items-start pr-6">
      <svg className="mt-[25px] h-2 w-[14px]" viewBox="0 0 14 8">
        <path d="m1 7 6-6 6 6" fill="none" stroke="#1a1a1a" strokeWidth="1.500" />
      </svg>
      <svg className="mt-5 ml-[23px] h-[18px] w-5" viewBox="0 0 20 18">
        <path d="M5 15.300a4.200 4.200 0 0 1-.4-8.300A6 6 0 0 1 16 7.600a3.900 3.900 0 0 1-.4 7.700z" fill="#a9a9a9" stroke="#1a1a1a" strokeWidth="1.400" />
        <path d="m3.700 1 15.500 15" stroke="#eee" strokeWidth="1.200" />
        <path d="m2.500 1 16 16" stroke="#1a1a1a" strokeWidth="1.300" />
      </svg>
      <div className="ml-[23px] w-[30px] pt-[9px] text-center text-[14.300px]">
        <div>ENG</div>
        <div>IN</div>
      </div>
      <svg className="mt-5 ml-[22px] h-[17px] w-5" viewBox="0 0 20 17" fill="none" stroke="#1a1a1a" strokeWidth="1.400">
        <path d="M.8 6a13 13 0 0 1 18.400 0M3.600 9a9 9 0 0 1 12.800 0M6.300 11.800a5.200 5.200 0 0 1 7.400 0" />
        <circle cx="10" cy="14.500" r="1.800" fill="#1a1a1a" stroke="none" />
      </svg>
      <svg className="mt-5 ml-[10px] h-[18px] w-5" viewBox="0 0 20 18" fill="none" stroke="#1a1a1a" strokeWidth="1.300">
        <path d="M.7 6.300h3.400L8.500 2v14l-4.400-4.300H.7z" />
        <path d="M11 6.300a4 4 0 0 1 0 5.400M13.500 3.900a7.300 7.300 0 0 1 0 10.200M16 1.500a10.800 10.800 0 0 1 0 15" />
      </svg>
      <svg className="mt-[19px] ml-[10px] h-[18px] w-5" viewBox="0 0 20 18">
        <path d="M10 5h5.500A1.700 1.700 0 0 1 17.200 6.700v7.100a1.700 1.700 0 0 1-1.700 1.700H3" fill="none" stroke="#1a1a1a" strokeWidth="1.400" />
        <path d="M17.500 8.300h1a1.300 1.300 0 0 1 1.300 1.300v1.300a1.300 1.300 0 0 1-1.300 1.300h-1z" fill="#1a1a1a" />
        <path d="M7 0c1 3 2 6 1.300 9.500-.5 2.500-2 4-4 3.800L2 16.500l-1-.8L2 12C-.5 8 1 4 7 0z" fill="#1a1a1a" />
        <path d="m2.500 14 4-6" stroke="#eee" strokeWidth=".9" />
      </svg>
      <div className="ml-[19px] w-20 pt-[8px] text-right text-[14.900px]">
        <div className="tracking-[-0.300px]">21:38</div>
        <div className="whitespace-nowrap">14-07-2025</div>
      </div>
    </div>
  </div>
);

export default function App() {
  return (
    <div className="flex h-[1080px] w-[1920px] flex-col overflow-hidden bg-[#d3e3fd] font-['Open_Sans',sans-serif]">
      <TabStrip />
      <Toolbar />
      <div className="h-[3px] shrink-0 bg-[linear-gradient(90deg,#ff4b4b,#fffd80)]" />
      <div className="flex h-[908px] font-['Noto_Sans_CJK_JP',sans-serif]">
        <Sidebar />
        <Main />
      </div>
      <Taskbar />
    </div>
  );
}
